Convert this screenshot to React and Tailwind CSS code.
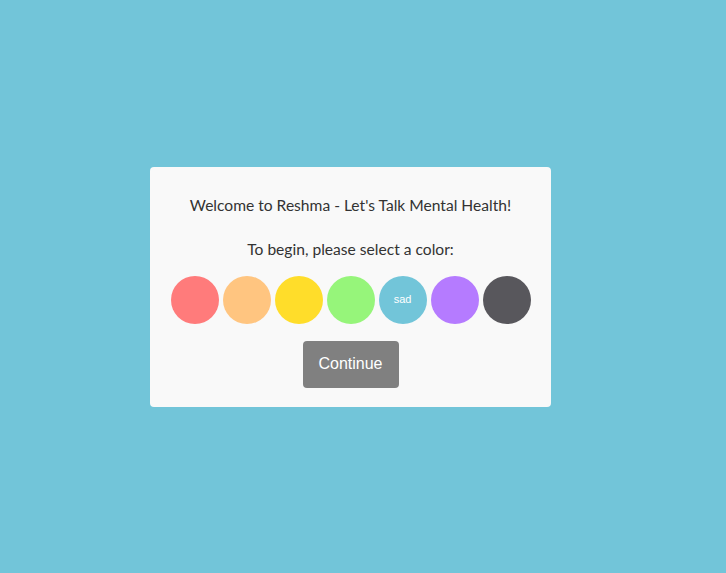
const colors = [
  { name: 'angry', bg: 'bg-[#ff7b7b]' },
  { name: 'anxious', bg: 'bg-[#ffc580]' },
  { name: 'happy', bg: 'bg-[#ffdd2a]' },
  { name: 'calm', bg: 'bg-[#96f57a]' },
  { name: 'sad', bg: 'bg-[#72c5d9]', label: true },
  { name: 'confused', bg: 'bg-[#b57bff]' },
  { name: 'numb', bg: 'bg-[#58575c]' },
]

export default function App() {
  return (
    <div className="min-h-screen w-full bg-[#72c5d9] flex items-center justify-center pr-[25px]">
      <div
        className="w-[401px] h-[240px] bg-[#f9f9f9] rounded flex flex-col items-center pt-[26px] text-[#333]"
        style={{ fontFamily: 'Lato, "Noto Sans", sans-serif' }}
      >
        <p className="text-[15.6px] leading-6">Welcome to Reshma - Let's Talk Mental Health!</p>
        <p className="text-[15.6px] leading-6 mt-5">To begin, please select a color:</p>
        <div className="flex gap-1 mt-[15px]">
          {colors.map((c) => (
            <button
              key={c.name}
              className={`w-12 h-12 rounded-full ${c.bg} flex items-center justify-center text-white text-[11px]`}
              style={{ fontFamily: '"Liberation Sans", Arial, sans-serif' }}
            >
              {c.label ? c.name : ''}
            </button>
          ))}
        </div>
        <button
          className="mt-[17px] w-24 h-[47px] bg-[#808080] rounded text-white text-[16px]"
          style={{ fontFamily: '"Liberation Sans", Arial, sans-serif' }}
        >
          Continue
        </button>
      </div>
    </div>
  )
}
